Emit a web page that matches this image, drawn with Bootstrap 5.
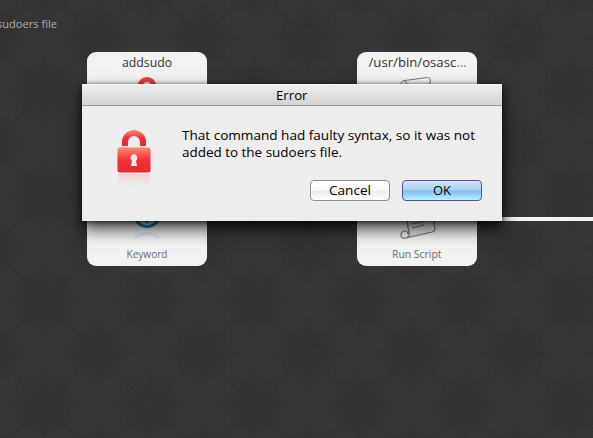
<!DOCTYPE html>
<html lang="en">
<head>
<meta charset="utf-8">
<meta name="viewport" content="width=device-width, initial-scale=1">
<title>Error</title>
<link href="https://cdn.jsdelivr.net/npm/bootstrap@5.3.0/dist/css/bootstrap.min.css" rel="stylesheet">
<style>
body{background:#353535;font-family:"Open Sans","Noto Sans",sans-serif;color:#333;overflow:hidden}
.workspace{width:593px;height:438px}
.canvas-pattern{inset:0;width:593px;height:438px}
.caption{left:0;top:16px}
svg{display:block;overflow:visible}
text{font-family:"Open Sans","Noto Sans",sans-serif}
.dialog-win text{fill:#000;font-size:13.5px}
.node{width:120px;height:214px;top:52px;border-radius:9px;background:#f2f2f2}
.node-a{left:87px}.node-b{left:357px}
.link-line{left:477px;top:217px;width:116px;height:4px;background:#f2f2f2}
.dialog-win{left:82px;top:84px;width:420px;height:137px;background:#ededed;box-shadow:0 8px 16px rgba(0,0,0,.75),0 1px 5px rgba(0,0,0,.7)}
.title-strip{height:22px;background:linear-gradient(#fafafa,#ececec 8%,#d3d3d3);border-bottom:1px solid #989898}
.dialog-main{padding:24px 20px 0 34px}
.lock-art{width:36px;height:60px}
.message-col{margin-left:30px}
.dialog-buttons{gap:12px;padding-right:20px;margin-top:-10px}
.dialog-body{height:84px}
.btn-mac{width:80px;height:21px;padding:0;border-radius:4px;border:1px solid #8d8d8d;background:linear-gradient(#fff,#fafafa 48%,#ededed 52%,#fff)}
.btn-blue{border-color:#50549b;background:linear-gradient(#d3e4f7,#a9cff4 48%,#80bdf0 54%,#c0f0ff)}
</style>
</head>
<body>
<main class="workspace position-relative overflow-hidden">
<svg class="canvas-pattern position-absolute">
<defs>
<g id="petal"><path d="M0-3Q2-9 0-14Q-2-9 0-3M-4-15q4-4 8 0M-6-19q3-5 6-1q3-4 6 1q3 5-3 6M-4-24q-4-3 1-5q3 1 3 5q0-4 3-5q5 2 1 5"/></g>
<g id="arm"><path d="M0-22V-31M-3-36q4 2 3 5q-1-3 3-5M-3-30h6"/></g>
<g id="medallion" fill="none" stroke="#2a2a2a" stroke-width="1" opacity=".45">
<circle r="27" fill="#2b2b2b" stroke="none" opacity=".45"/><circle r="14" stroke-width="1.500" stroke-dasharray="3 1"/><circle r="12"/><circle r="19" stroke-dasharray="2 3"/>
<use href="#petal"/><use href="#petal" transform="rotate(45)"/><use href="#petal" transform="rotate(90)"/><use href="#petal" transform="rotate(135)"/><use href="#petal" transform="rotate(180)"/><use href="#petal" transform="rotate(225)"/><use href="#petal" transform="rotate(270)"/><use href="#petal" transform="rotate(315)"/>
<use href="#arm"/><use href="#arm" transform="rotate(90)"/><use href="#arm" transform="rotate(180)"/><use href="#arm" transform="rotate(270)"/><use href="#arm" transform="rotate(45)"/><use href="#arm" transform="rotate(135)"/><use href="#arm" transform="rotate(225)"/><use href="#arm" transform="rotate(315)"/>
</g>
<pattern id="damask" width="105" height="105" patternUnits="userSpaceOnUse" x="-8" y="-67"><use href="#medallion" x="52.5" y="52.5"/><use href="#medallion"/><use href="#medallion" x="105"/><use href="#medallion" y="105"/><use href="#medallion" x="105" y="105"/></pattern>
<linearGradient id="red" x2="0" y2="1"><stop stop-color="#f98b74"/><stop offset=".5" stop-color="#f82e35"/><stop offset="1" stop-color="#e02c36"/></linearGradient>
<linearGradient id="fade" x2="0" y2="1"><stop stop-color="#f0c4c0" stop-opacity=".6"/><stop offset="1" stop-color="#f0c4c0" stop-opacity="0"/></linearGradient>
<linearGradient id="paper" x2="0" y2="1"><stop stop-color="#fff"/><stop offset="1" stop-color="#ddd"/></linearGradient>
</defs>
<rect width="593" height="438" fill="url(#damask)"/>
</svg>
<div class="caption position-absolute"><svg width="62" height="16"><text x="-3" y="12" textLength="60" lengthAdjust="spacingAndGlyphs" fill="#b0b0b0" font-size="11.5">sudoers file</text></svg></div>

<section class="node node-a position-absolute">
<svg width="120" height="214"><text x="35" y="15" font-size="13" textLength="50" lengthAdjust="spacingAndGlyphs" fill="#333">addsudo</text>
<path d="M53 38V34.500a7 7 0 0 1 14 0v5" fill="none" stroke="#f23a43" stroke-width="5"/>
<circle cx="60" cy="162" r="12.5" fill="none" stroke="#188bb8" stroke-width="3"/><path d="M55 166l5 4 5-4" fill="none" stroke="#188bb8" stroke-width="2.500"/>
<path d="M48 186q12-9 24 0" fill="none" stroke="#a5d8e6" stroke-width="3" opacity=".4"/>
<text x="39.5" y="206" font-size="11" textLength="41" lengthAdjust="spacingAndGlyphs" fill="#6b6b6b">Keyword</text></svg>
</section>
<section class="node node-b position-absolute">
<svg width="120" height="214"><text x="11.5" y="15" font-size="13" textLength="98" lengthAdjust="spacingAndGlyphs" fill="#333">/usr/bin/osasc<tspan fill="#5b86a8">…</tspan></text>
<path d="M43.500 34q0-5 4-5.500l23-3q3 0 3 3.500 0 3-3 3.500l-20 2M47 28.500q3 1 3 6" fill="url(#paper)" stroke="#777"/>
<path d="M50 160q0 12 3 23l-4 3 27-6q1-6-4-20z" fill="url(#paper)" stroke="none"/>
<path d="M50 160q0 12 2 20 1 5-3 6-5 1-5-3 0-4 4-4 3 0 3 3M49 186l26-6q3-1 3-3-1-8-4-17" fill="none" stroke="#777" stroke-width="1.200"/><path d="M55 172l18-4M55 176l12-3" stroke="#777"/>
<text x="35" y="206" font-size="11" textLength="49.5" lengthAdjust="spacingAndGlyphs" fill="#6b6b6b">Run Script</text></svg>
</section>
<div class="link-line position-absolute"></div>

<section class="dialog-win position-absolute" role="dialog" aria-label="Error">
<header class="title-strip d-flex justify-content-center"><svg width="32" height="21"><text x="0" y="16" textLength="31.5" lengthAdjust="spacingAndGlyphs">Error</text></svg></header>
<div class="dialog-main dialog-body d-flex align-items-start">
<svg class="lock-art flex-shrink-0" viewBox="0 0 36 60"><path d="M6 16V12a12 12 0 0 1 24 0v4h-6v-4a6 6 0 0 0-12 0v4z" fill="url(#red)"/><rect x="1.500" y="17.500" width="33" height="25" rx="2.500" fill="url(#red)"/><path d="M18 24a4 4 0 0 1 2 7l1 5h-6l1-5a4 4 0 0 1 2-7" fill="#ededed"/><path d="M2 44h32v13H2z" fill="url(#fade)"/><path d="M15.500 51h5l1 6h-7z" fill="#ededed" opacity=".7"/></svg>
<div class="message-col">
<svg width="296" height="37"><text x="0" y="10" textLength="293" lengthAdjust="spacingAndGlyphs">That command had faulty syntax, so it was not</text><text x="0" y="27" textLength="160" lengthAdjust="spacingAndGlyphs">added to the sudoers file.</text></svg>
</div></div>
<div class="dialog-buttons d-flex justify-content-end position-relative">
<button class="btn btn-mac"><svg width="78" height="19"><text x="18" y="14" textLength="42" lengthAdjust="spacingAndGlyphs">Cancel</text></svg></button>
<button class="btn btn-mac btn-blue"><svg width="78" height="19"><text x="30" y="14" textLength="18" lengthAdjust="spacingAndGlyphs">OK</text></svg></button>
</div>
</section>
</main>
<script src="https://cdn.jsdelivr.net/npm/bootstrap@5.3.0/dist/js/bootstrap.bundle.min.js"></script>
</body>
</html>
